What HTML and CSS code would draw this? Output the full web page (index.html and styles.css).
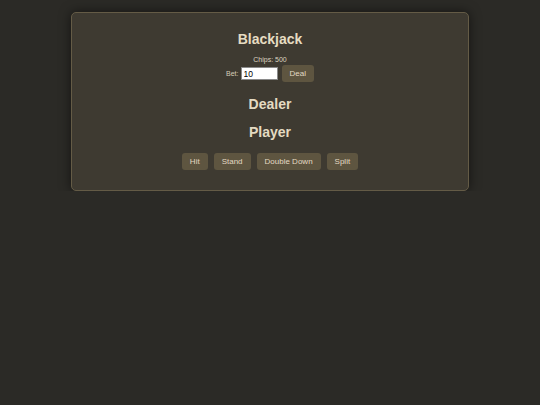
FILE: index.html
```html
<!DOCTYPE html>
<html>
<head>
<meta charset="utf-8">
<link rel="stylesheet" href="styles.css">
</head>
<body>
<div class="table">
  <h1 class="title">Blackjack</h1>
  <div class="chips">Chips: 500</div>
  <div class="bet-row">
    <label class="bet-label" for="bet">Bet:</label>
    <input id="bet" class="bet-input" type="number" value="10">
    <button class="btn">Deal</button>
  </div>
  <h2 class="section">Dealer</h2>
  <h2 class="section section-player">Player</h2>
  <div class="actions">
    <button class="btn">Hit</button>
    <button class="btn">Stand</button>
    <button class="btn">Double Down</button>
    <button class="btn">Split</button>
  </div>
</div>
</body>
</html>
```
FILE: styles.css
```css
html, body {
  margin: 0;
  padding: 0;
  background: #2b2a26;
  font-family: "Liberation Sans", Arial, sans-serif;
  color: #e2d8c2;
}
.table {
  width: 396px;
  margin: 12px auto 0;
  border: 1px solid #645b46;
  border-radius: 5px;
  background: #3e3a31;
  box-shadow: 0 0 12px rgba(0, 0, 0, 0.55);
  padding: 18px 0 20px;
  text-align: center;
}
.title {
  margin: 0;
  font-size: 14px;
  line-height: 16px;
  font-weight: bold;
  color: #e6dcc2;
}
.chips {
  margin-top: 9px;
  font-size: 7px;
  line-height: 8px;
  color: #ddd4c0;
}
.bet-row {
  margin-top: 1px;
  display: flex;
  justify-content: center;
  align-items: center;
  gap: 4px;
}
.bet-label {
  font-size: 7px;
  color: #d6cdb9;
  margin-right: -2px;
}
.bet-input {
  width: 37px;
  height: 13px;
  box-sizing: border-box;
  border: 1px solid #8a8a8a;
  background: #ffffff;
  color: #000;
  font-family: "Liberation Sans", Arial, sans-serif;
  font-size: 8.5px;
  padding: 0 2px;
  margin: 0;
  -moz-appearance: textfield;
}
.bet-input::-webkit-outer-spin-button,
.bet-input::-webkit-inner-spin-button {
  -webkit-appearance: none;
  margin: 0;
}
.btn {
  font-family: "Liberation Sans", Arial, sans-serif;
  font-size: 8px;
  line-height: 9px;
  padding: 4px 8px;
  border: none;
  border-radius: 3px;
  background: #5e5540;
  color: #e3d9c3;
  margin: 0;
}
.section {
  margin: 14px 0 0;
  font-size: 14px;
  line-height: 16px;
  font-weight: bold;
  color: #e4dac2;
}
.section-player {
  margin-top: 12px;
}
.actions {
  margin-top: 13px;
  display: flex;
  justify-content: center;
  gap: 6px;
}
```
